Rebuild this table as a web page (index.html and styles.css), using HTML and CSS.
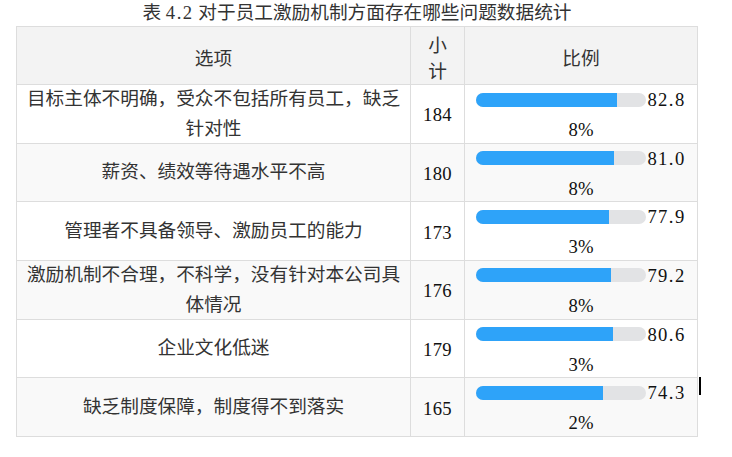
FILE: index.html
```html
<!DOCTYPE html>
<html lang="zh">
<head>
<meta charset="utf-8">
<title>表 4.2</title>
<link rel="stylesheet" href="styles.css">
</head>
<body>
<div class="page">
  <h1 class="title">表 <span class="num">4.2</span> 对于员工激励机制方面存在哪些问题数据统计</h1>
  <div class="table">
    <div class="cell head">选项</div>
    <div class="cell head sub">小计</div>
    <div class="cell head">比例</div>

    <div class="cell opt">目标主体不明确，受众不包括所有员工，缺乏针对性</div>
    <div class="cell cnt">184</div>
    <div class="cell ratio"><div class="l1"><span class="track"><span class="fill" style="width:82.88%"></span></span><span class="val">82.8</span></div><div class="l2">8%</div></div>

    <div class="cell opt even">薪资、绩效等待遇水平不高</div>
    <div class="cell cnt even">180</div>
    <div class="cell ratio even"><div class="l1"><span class="track"><span class="fill" style="width:81.08%"></span></span><span class="val">81.0</span></div><div class="l2">8%</div></div>

    <div class="cell opt">管理者不具备领导、激励员工的能力</div>
    <div class="cell cnt">173</div>
    <div class="cell ratio"><div class="l1"><span class="track"><span class="fill" style="width:77.93%"></span></span><span class="val">77.9</span></div><div class="l2">3%</div></div>

    <div class="cell opt even">激励机制不合理，不科学，没有针对本公司具体情况</div>
    <div class="cell cnt even">176</div>
    <div class="cell ratio even"><div class="l1"><span class="track"><span class="fill" style="width:79.28%"></span></span><span class="val">79.2</span></div><div class="l2">8%</div></div>

    <div class="cell opt">企业文化低迷</div>
    <div class="cell cnt">179</div>
    <div class="cell ratio"><div class="l1"><span class="track"><span class="fill" style="width:80.63%"></span></span><span class="val">80.6</span></div><div class="l2">3%</div></div>

    <div class="cell opt even">缺乏制度保障，制度得不到落实</div>
    <div class="cell cnt even">165</div>
    <div class="cell ratio even"><div class="l1"><span class="track"><span class="fill" style="width:74.32%"></span></span><span class="val">74.3</span></div><div class="l2">2%</div></div>
  </div>
  <span class="caret"></span>
</div>
</body>
</html>
```

FILE: styles.css
```css
html, body {
  margin: 0;
  padding: 0;
  background: #fff;
}
body {
  font-family: "Liberation Serif", "Noto Sans CJK SC", serif;
  font-size: 18.67px;
  color: #222;
}
.page {
  position: relative;
  width: 682px;
  padding-left: 16px;
}
.title {
  margin: 0;
  height: 26px;
  line-height: 25px;
  font-size: 18.67px;
  font-weight: normal;
  text-align: center;
  color: #333;
  white-space: nowrap;
}
.num {
  letter-spacing: 1.5px;
}
.table {
  display: grid;
  grid-template-columns: 393px 53px 232px;
  grid-template-rows: 57px repeat(6, 57.67px);
  gap: 1px;
  padding: 1px;
  background: #dddddd;
}
.cell {
  background: #fff;
  display: flex;
  align-items: center;
  justify-content: center;
  text-align: center;
  line-height: 30px;
  color: #333;
}
.cell.even {
  background: #f9f9f9;
}
.head {
  background: #f3f3f3;
  padding-top: 6px;
  box-sizing: border-box;
}
.head.sub {
  line-height: 26px;
  padding-left: 10px;
  padding-right: 10px;
}
.opt {
  padding: 0 9px;
}
.cnt {
  padding-top: 3px;
  box-sizing: border-box;
  color: #111;
  letter-spacing: 0.3px;
}
.ratio {
  flex-direction: column;
  justify-content: flex-start;
  color: #111;
}
.l1 {
  display: flex;
  align-items: center;
  height: 29px;
}
.track {
  display: block;
  width: 170px;
  height: 14px;
  border-radius: 7px;
  background: #e2e3e5;
  overflow: hidden;
  margin-right: 1px;
}
.fill {
  display: block;
  height: 100%;
  background: #2ea3f9;
}
.val {
  letter-spacing: 1.4px;
  line-height: 29px;
}
.l2 {
  line-height: 32px;
}
.caret {
  position: absolute;
  left: 699px;
  top: 377px;
  width: 2px;
  height: 18px;
  background: #000;
}
```
